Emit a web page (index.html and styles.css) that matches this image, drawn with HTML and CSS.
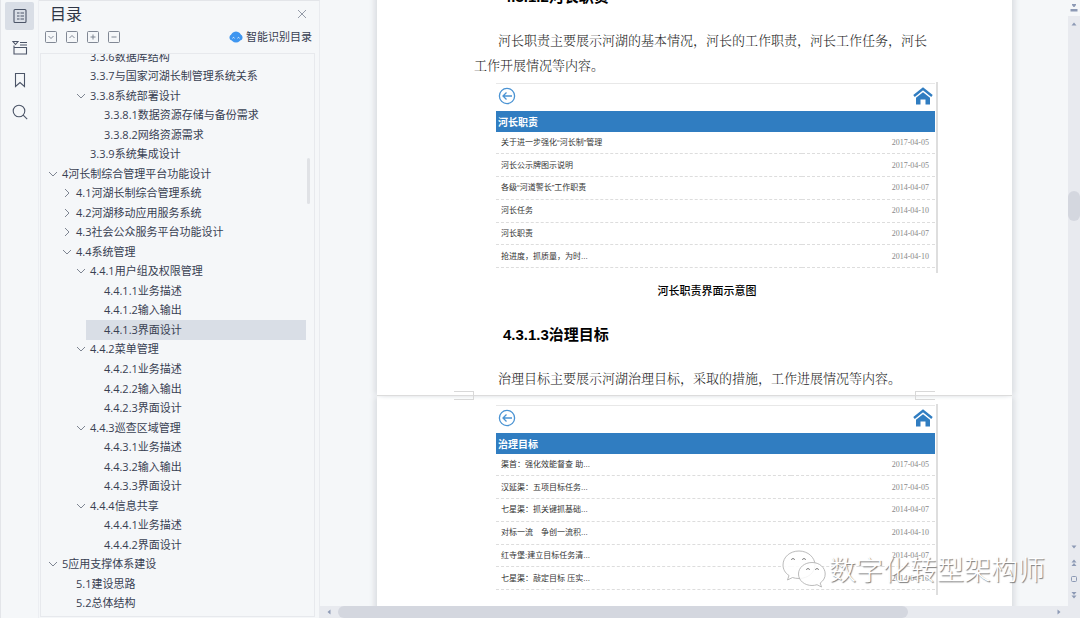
FILE: index.html
```html
<!DOCTYPE html>
<html lang="zh-CN">
<head>
<meta charset="utf-8">
<title>目录</title>
<link rel="stylesheet" href="styles.css">
</head>
<body>
<svg class="defs" aria-hidden="true">
  <symbol id="down" viewBox="0 0 10 10"><path d="M1 3l4 4 4-4" fill="none" stroke="currentColor"/></symbol>
  <symbol id="right" viewBox="0 0 10 10"><path d="M3 1l4 4-4 4" fill="none" stroke="currentColor"/></symbol>
  <symbol id="back" viewBox="0 0 18 18"><g fill="none" stroke="#4a93d3" stroke-width="1.3"><circle cx="9" cy="9" r="7.6"/><path d="M14 9H5M8.500 5.500L5 9l3.500 3.500"/></g></symbol>
  <symbol id="home" viewBox="0 0 20 18"><path d="M1 9L10 1.800 19 9" fill="none" stroke="#307dc1" stroke-width="2.400"/><path d="M3 10.700l7-5.500 7 5.500V17.500h-4.500V12.500h-5v5H3z" fill="#307dc1"/></symbol>
</svg>
<div class="app">
  <nav class="rail">
    <button class="rail-btn active" aria-label="目录"><svg viewBox="0 0 16 16"><rect x="2" y="1.500" width="12" height="13" rx="1"/><path d="M5 5h2.500M5 8h2.500M5 11h2.500M8.500 5H12M8.500 8H12M8.500 11H12"/></svg></button>
    <button class="rail-btn" aria-label="章节"><svg viewBox="0 0 16 16"><path d="M1 1.500h5L3.500 4.500zM8 2.500h7M8 5h7M2 5.500v8.500h12.500V7.500H2"/></svg></button>
    <button class="rail-btn" aria-label="书签"><svg viewBox="0 0 16 16"><path d="M3.500 1.500h9v13L8 10.500l-4.500 4z"/></svg></button>
    <button class="rail-btn" aria-label="查找"><svg viewBox="0 0 16 16"><circle cx="7" cy="7" r="5.800"/><path d="M11.200 11.200l4 4"/></svg></button>
  </nav>
  <aside class="panel">
    <header class="panel-head">
      <h1>目录</h1>
      <button class="close" aria-label="关闭"><svg viewBox="0 0 10 10"><path d="M1 1l8 8M9 1L1 9"/></svg></button>
    </header>
    <div class="tools">
      <button aria-label="展开"><svg viewBox="0 0 12 12"><rect x=".5" y=".5" width="11" height="11" rx="1"/><path d="M3.500 5L6 7.500 8.500 5"/></svg></button>
      <button aria-label="收起"><svg viewBox="0 0 12 12"><rect x=".5" y=".5" width="11" height="11" rx="1"/><path d="M3.500 7L6 4.500 8.500 7"/></svg></button>
      <button aria-label="增加级别"><svg viewBox="0 0 12 12"><rect x=".5" y=".5" width="11" height="11" rx="1"/><path d="M3.500 6h5M6 3.500v5"/></svg></button>
      <button aria-label="减少级别"><svg viewBox="0 0 12 12"><rect x=".5" y=".5" width="11" height="11" rx="1"/><path d="M3.500 6h5"/></svg></button>
      <button class="smart"><svg viewBox="0 0 14 12"><ellipse cx="7" cy="6" rx="5.300" ry="5.500" fill="#3f96f0"/><rect x=".5" y="3.500" width="13" height="6" rx="3" fill="#3f96f0"/><path d="M3.500 7.200q1-1.500 2 0M8.500 7.200q1-1.500 2 0" fill="none" stroke="#fff"/></svg>智能识别目录</button>
    </div>
    <div class="tree-box">
      <ul class="tree">
        <li class="l3"><a href="#">3.3.6数据库结构</a></li>
        <li class="l3"><a href="#">3.3.7与国家河湖长制管理系统关系</a></li>
        <li class="l3"><svg><use href="#down"/></svg><a href="#">3.3.8系统部署设计</a></li>
        <li class="l4"><a href="#">3.3.8.1数据资源存储与备份需求</a></li>
        <li class="l4"><a href="#">3.3.8.2网络资源需求</a></li>
        <li class="l3"><a href="#">3.3.9系统集成设计</a></li>
        <li class="l1"><svg><use href="#down"/></svg><a href="#">4河长制综合管理平台功能设计</a></li>
        <li class="l2"><svg><use href="#right"/></svg><a href="#">4.1河湖长制综合管理系统</a></li>
        <li class="l2"><svg><use href="#right"/></svg><a href="#">4.2河湖移动应用服务系统</a></li>
        <li class="l2"><svg><use href="#right"/></svg><a href="#">4.3社会公众服务平台功能设计</a></li>
        <li class="l2"><svg><use href="#down"/></svg><a href="#">4.4系统管理</a></li>
        <li class="l3"><svg><use href="#down"/></svg><a href="#">4.4.1用户组及权限管理</a></li>
        <li class="l4"><a href="#">4.4.1.1业务描述</a></li>
        <li class="l4"><a href="#">4.4.1.2输入输出</a></li>
        <li class="l4 selected"><a href="#">4.4.1.3界面设计</a></li>
        <li class="l3"><svg><use href="#down"/></svg><a href="#">4.4.2菜单管理</a></li>
        <li class="l4"><a href="#">4.4.2.1业务描述</a></li>
        <li class="l4"><a href="#">4.4.2.2输入输出</a></li>
        <li class="l4"><a href="#">4.4.2.3界面设计</a></li>
        <li class="l3"><svg><use href="#down"/></svg><a href="#">4.4.3巡查区域管理</a></li>
        <li class="l4"><a href="#">4.4.3.1业务描述</a></li>
        <li class="l4"><a href="#">4.4.3.2输入输出</a></li>
        <li class="l4"><a href="#">4.4.3.3界面设计</a></li>
        <li class="l3"><svg><use href="#down"/></svg><a href="#">4.4.4信息共享</a></li>
        <li class="l4"><a href="#">4.4.4.1业务描述</a></li>
        <li class="l4"><a href="#">4.4.4.2界面设计</a></li>
        <li class="l1"><svg><use href="#down"/></svg><a href="#">5应用支撑体系建设</a></li>
        <li class="l2"><a href="#">5.1建设思路</a></li>
        <li class="l2"><a href="#">5.2总体结构</a></li>
      </ul>
      <div class="tree-thumb"></div>
    </div>
  </aside>
  <main class="viewer">
    <div class="canvas">
      <article class="page first">
        <h2>4.3.1.2河长职责</h2>
        <p>河长职责主要展示河湖的基本情况，河长的工作职责，河长工作任务，河长工作开展情况等内容。</p>
        <figure>
          <div class="shot">
            <div class="shot-nav"><svg class="back"><use href="#back"/></svg><svg class="home"><use href="#home"/></svg></div>
            <h3>河长职责</h3>
            <table>
              <tr><td>关于进一步强化“河长制”管理</td><td>2017-04-05</td></tr>
              <tr><td>河长公示牌图示说明</td><td>2017-04-05</td></tr>
              <tr><td>各级“河道警长”工作职责</td><td>2014-04-07</td></tr>
              <tr><td>河长任务</td><td>2014-04-10</td></tr>
              <tr><td>河长职责</td><td>2014-04-07</td></tr>
              <tr><td>抢进度，抓质量，为时...</td><td>2014-04-10</td></tr>
            </table>
          </div>
          <figcaption>河长职责界面示意图</figcaption>
        </figure>
        <h2>4.3.1.3治理目标</h2>
        <p>治理目标主要展示河湖治理目标，采取的措施，工作进展情况等内容。</p>
        <span class="notch left"></span><span class="notch right"></span>
      </article>
      <article class="page second">
        <figure>
          <div class="shot">
            <div class="shot-nav"><svg class="back"><use href="#back"/></svg><svg class="home"><use href="#home"/></svg></div>
            <h3>治理目标</h3>
            <table>
              <tr><td>渠首：强化效能督查 助...</td><td>2017-04-05</td></tr>
              <tr><td>汉延渠：五项目标任务...</td><td>2017-04-05</td></tr>
              <tr><td>七星渠：抓关键抓基础...</td><td>2014-04-07</td></tr>
              <tr><td>对标一流　争创一流积...</td><td>2014-04-10</td></tr>
              <tr><td>红寺堡:建立目标任务清...</td><td>2014-04-07</td></tr>
              <tr><td>七星渠：敲定目标 压实...</td><td>2014-04-10</td></tr>
            </table>
          </div>
        </figure>
      </article>
    </div>
    <div class="hbar">
      <button aria-label="向左"><svg viewBox="0 0 8 8"><path d="M5.500 1.500v5L2.500 4z"/></svg></button>
      <div class="htrack"><div class="hthumb"></div></div>
      <button aria-label="向右"><svg viewBox="0 0 8 8"><path d="M2.500 1.500v5l3-2.500z"/></svg></button>
    </div>
  </main>
  <div class="vbar">
    <button class="ruler" aria-label="标尺"><svg viewBox="0 0 8 8"><path d="M2 0h4v1L4.500 3h-1L2 1zM.5 5h7v2.500h-7z"/></svg></button>
    <div class="vtrack">
      <button aria-label="向上"><svg viewBox="0 0 8 8"><path d="M1.500 5.500h5L4 2.500z"/></svg></button>
      <div class="vthumb"></div>
      <div class="vbuttons">
        <button aria-label="向下"><svg viewBox="0 0 8 8"><path d="M1.500 2.500h5L4 5.500z"/></svg></button>
        <button aria-label="上一页"><svg viewBox="0 0 8 8"><path d="M1.500 3.500h5L4 .5zM1.500 7h5L4 4z"/></svg></button>
        <button aria-label="选择浏览对象"><svg viewBox="0 0 8 8"><rect x="1.500" y="1.500" width="5" height="5" rx="1" fill="none" stroke="#8d9ab5"/></svg></button>
        <button aria-label="下一页"><svg viewBox="0 0 8 8"><path d="M1.500 1h5L4 4zM1.500 4.500h5L4 7.500z"/></svg></button>
      </div>
    </div>
  </div>
  <div class="watermark">
    <svg viewBox="0 0 44 38"><g fill="#fff" fill-opacity=".85" stroke="#aaa" stroke-width=".8"><path d="M17 1C8 1 1 7 1 15c0 4 2 8 6 10.500L5.500 30l5-2.500c2 .7 4 1 6.500 1 9 0 16-6 16-13.500S26 1 17 1z"/><path d="M30 12.500c-7.500 0-13.500 5-13.500 11.500S22.500 35.500 30 35.500c1.800 0 3.500-.3 5-.8l4.500 2.300-1.300-4c3.300-2.200 5-5.300 5-9 0-6.500-5.700-11.500-13.200-11.500z"/></g><g fill="none" stroke="#888"><path d="M9.500 10a1.500 1.500 0 0 1 3 0M20.500 10a1.500 1.500 0 0 1 3 0M24.500 20a1.500 1.500 0 0 1 3 0M33.500 20a1.500 1.500 0 0 1 3 0"/></g></svg>
    <span>数字化转型架构师</span>
  </div>
</div>
</body>
</html>
```
FILE: styles.css
```css
* { box-sizing: border-box; }
body, h1, h2, h3, p, ul, figure { margin: 0; padding: 0; }
body { font-family: "Open Sans", "Noto Sans CJK SC", sans-serif; color: #384052; background: #f5f7f9; }
button { display: flex; align-items: center; justify-content: center; border: 0; padding: 0; background: none; color: inherit; font: inherit; }
svg { display: block; }
.defs { display: none; }
.app { position: relative; display: flex; height: 100vh; overflow: hidden; border-left: 1px solid #e3e5e9; }

.rail { flex: 0 0 38px; display: flex; flex-direction: column; align-items: center; gap: 4px; padding-top: 2px; border-right: 1px solid #eceef2; }
.rail-btn { width: 29px; height: 28px; border-radius: 2px; }
.rail-btn.active { background: #d9dee6; }
.rail-btn svg { width: 16px; height: 16px; fill: none; stroke: #4c5568; stroke-width: 1.1; }

.panel { flex: 0 0 281px; display: flex; flex-direction: column; padding: 0 4px 1px 1px; border-right: 1px solid #e9ebef; border-top: 1px solid #e3e5e9; }
.panel-head { display: flex; align-items: center; justify-content: space-between; height: 26px; padding: 0 8px 0 10px; }
.panel-head h1 { font-size: 16px; line-height: 26px; font-weight: 400; color: #2e3545; }
.close svg { width: 10px; height: 10px; stroke: #7b8393; stroke-width: .8; }
.tools { display: flex; align-items: center; gap: 9px; height: 20px; margin-bottom: 6px; padding: 0 3px 0 5px; }
.tools svg { width: 12px; height: 12px; fill: none; stroke: #747b89; stroke-width: .9; }
.tools .smart { margin-left: auto; gap: 3px; font-size: 11px; line-height: 16px; }
.tools .smart svg { width: 14px; stroke: none; }
.tree-box { position: relative; flex: 1; display: flex; min-height: 0; padding-bottom: 3px; overflow: hidden; border: 1px solid #e7e9ed; }
.tree { flex: 1; display: flex; flex-direction: column; margin-top: -7px; padding-right: 8px; list-style: none; }
.tree li { position: relative; flex: 1; display: flex; align-items: center; padding-left: 18px; font-size: 11px; line-height: 18px; min-height: 0; }
.tree li svg { position: absolute; left: 4px; width: 10px; height: 10px; color: #7e8592; }
.tree a { color: inherit; text-decoration: none; white-space: nowrap; }
.l1 { margin-left: 3px; }
.l2 { margin-left: 17px; }
.l3 { margin-left: 31px; }
.l4 { margin-left: 45px; }
.selected { background: #d9dee6; }
.tree-thumb { position: absolute; right: 4px; top: 104px; width: 3px; height: 46px; border-radius: 2px; background: #e0e2e6; }

.viewer { flex: 1; min-width: 0; display: flex; flex-direction: column; }
.canvas { flex: 1; min-height: 0; overflow: hidden; padding: 0 56px 0 57px; }
.page { position: relative; background: #fff; box-shadow: 4px 0 5px -1px #dcdfe3, -4px 0 5px -1px #dcdfe3; color: #222; }
.page h2 { margin-left: 126px; font: bold 15px/24px "Liberation Sans", "Noto Sans CJK SC", sans-serif; color: #000; }
.page p { margin: 0 81px 0 97px; font: 13px/25px "Liberation Serif", "Noto Serif CJK SC", "Noto Sans CJK SC", serif; font-weight: 300; text-indent: 24px; }
.first { z-index: 1; padding-bottom: 4px; border-bottom: 1px solid #dcdcdc; }
.first h2:first-child { margin-top: -15px; margin-bottom: 19px; }
.page figure { margin: 4px 74px 0 119px; }
.second { padding: 8px 0 20px; }
.page.second figure { margin-top: 0; }
.shot { padding: 1px 1px 5px 0; border-right: 2px solid #dedede; }
.shot-nav { display: flex; align-items: flex-start; justify-content: space-between; height: 28px; border-top: 1px solid #e8e8e8; padding: 3px 2px 0; }
.back { width: 18px; height: 18px; }
.home { width: 20px; height: 18px; }
.shot h3 { height: 21px; padding-left: 2px; background: #307dc1; color: #fff; font: bold 10px/21px "Noto Sans CJK SC", sans-serif; }
.shot table { width: 100%; height: 136px; border-collapse: collapse; }
.shot td { padding: 1px 5px 0; border-bottom: 1px dashed #ddd; font: 8px/12px "Liberation Sans", "Noto Sans CJK SC", sans-serif; color: #333; }
.shot td:last-child { padding-right: 6px; text-align: right; font-family: "Liberation Serif", serif; color: #888; }
figcaption { padding: 8px 0; margin-left: -20px; text-align: center; font: 500 11px/18px "Noto Sans CJK SC", sans-serif; color: #000; }
.first figure + h2 { margin-top: 16px; margin-bottom: 19px; }
.notch { position: absolute; bottom: -5px; width: 20px; height: 9px; border: 1px solid #d8d8d8; }
.notch.left { left: 77px; border-left: 0; }
.notch.right { right: 77px; border-right: 0; }

.hbar { position: relative; flex: 0 0 12px; display: flex; background: #e8eaef; }
.hbar button { width: 18px; }
.htrack { flex: 1; }
.hthumb { width: 80%; height: 12px; border-radius: 6px; background: #d4d7df; }
.hbar svg, .vbar svg { width: 8px; height: 8px; fill: #8d9ab5; }
.vbar { flex: 0 0 12px; display: flex; flex-direction: column; }
.vbar button { width: 12px; height: 16px; }
.vtrack { flex: 1; display: flex; flex-direction: column; background: #e8eaef; }
.vthumb { margin-top: 159px; height: 30px; border-radius: 6px; background: #d4d7df; }
.vbuttons { margin-top: auto; padding-bottom: 15px; }

.watermark { position: absolute; right: 35px; bottom: 30px; display: flex; align-items: center; gap: 3px; font: 300 27px/38px "Noto Sans CJK SC", sans-serif; color: #fff; text-shadow: 1px 1px 1px #777; white-space: nowrap; }
.watermark svg { width: 44px; height: 38px; }
```
